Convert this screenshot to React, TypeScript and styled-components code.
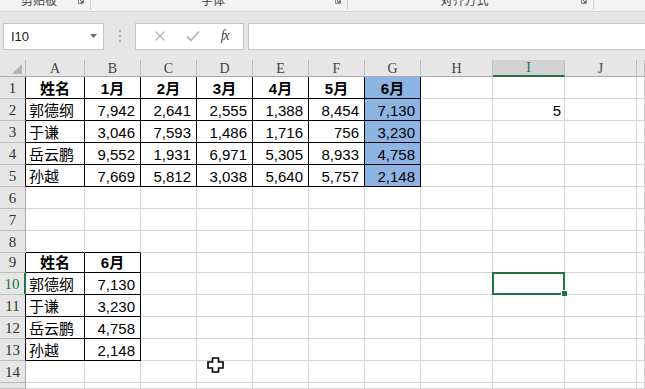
import React from 'react';
import styled, { createGlobalStyle, css } from 'styled-components';

const GlobalStyle = createGlobalStyle`
  html, body {
    margin: 0;
    padding: 0;
    background: #ffffff;
    overflow: hidden;
  }
  * {
    box-sizing: border-box;
  }
`;

const GREEN = '#217346';
const GRID = '#d4d4d4';
const HEAD_LINE = '#bdbdbd';
const UI_FONT = '"Liberation Sans", "Noto Sans CJK SC", sans-serif';
const CELL_FONT = '"Liberation Sans", "Noto Sans CJK SC", sans-serif';
const HEAD_FONT = '"Liberation Serif", "DejaVu Serif", serif';

const Page = styled.div`
  width: 645px;
  height: 389px;
  display: flex;
  flex-direction: column;
  overflow: hidden;
  font-family: ${UI_FONT};
`;

/* ribbon group captions, only their lower half is visible */
const RibbonStrip = styled.div`
  flex-shrink: 0;
  height: 12px;
  display: flex;
  background: #f3f3f3;
  border-bottom: 1px solid #d5d5d5;
  overflow: hidden;
`;

const RibbonGroup = styled.div<{ $w?: number }>`
  display: flex;
  align-items: flex-end;
  ${({ $w }) => ($w ? css`width: ${$w}px;` : css`flex: 1;`)}
  border-right: 1px solid #d0d0d0;
  height: 10px;
  &:last-child {
    border-right: none;
  }
`;

const GroupLabel = styled.span`
  flex: 1;
  text-align: center;
  font-size: 12px;
  line-height: 12px;
  color: #444;
  margin-bottom: 3px;
  white-space: nowrap;
`;

const Launcher = styled.svg`
  width: 6px;
  height: 6px;
  margin: 0 6px 4px 0;
  align-self: flex-end;
  position: relative;
  top: -2px;
`;

const FormulaBand = styled.div`
  flex-shrink: 0;
  height: 48px;
  background: #e6e6e6;
  display: flex;
  align-items: center;
  padding-left: 3px;
`;

const NameBox = styled.div`
  width: 101px;
  height: 27px;
  background: #fff;
  border: 1px solid #c6c6c6;
  display: flex;
  align-items: center;
  justify-content: space-between;
  padding: 0 6px 0 7px;
  font-size: 13px;
  color: #222;
`;

const Dots = styled.div`
  width: 31px;
  display: flex;
  flex-direction: column;
  align-items: center;
  gap: 3px;
  span {
    width: 2px;
    height: 2px;
    background: #b3b3b3;
  }
`;

const FxBox = styled.div`
  width: 109px;
  height: 27px;
  background: #fff;
  border: 1px solid #c6c6c6;
  display: flex;
  align-items: center;
  justify-content: space-around;
  padding: 0 4px 0 8px;
  margin-right: 4px;
`;

const FxText = styled.span`
  font-family: "Liberation Serif", serif;
  font-style: italic;
  font-size: 14px;
  color: #444;
  letter-spacing: -1px;
`;

const FormulaInput = styled.div`
  flex: 1;
  height: 27px;
  background: #fff;
  border: 1px solid #c6c6c6;
  border-right: none;
`;

const SheetArea = styled.div`
  position: relative;
  flex: 1;
  min-height: 0;
  overflow: hidden;
  display: grid;
  grid-template-columns: 26px 59px repeat(6, 56px) 72px 72px 72px 1fr;
  grid-template-rows: 17px repeat(8, 22px) 20px repeat(5, 22px) minmax(0, 1fr);
  background: #fff;
`;

const Corner = styled.div`
  background: #e6e6e6;
  border-right: 1px solid ${HEAD_LINE};
  border-bottom: 1px solid #ababab;
  display: flex;
  align-items: flex-end;
  justify-content: flex-end;
  padding: 0 3px 2px 0;
`;

const ColHead = styled.div<{ $active?: boolean }>`
  background: ${({ $active }) => ($active ? '#d2d2d2' : '#e6e6e6')};
  border-right: 1px solid ${HEAD_LINE};
  border-bottom: ${({ $active }) => ($active ? `2px solid ${GREEN}` : '1px solid #ababab')};
  color: ${({ $active }) => ($active ? GREEN : '#444')};
  font-family: ${HEAD_FONT};
  font-size: 14px;
  line-height: 14px;
  display: flex;
  align-items: center;
  justify-content: center;
  padding-top: 1px;
`;

const RowHead = styled.div<{ $active?: boolean; $edge?: string }>`
  background: #e6e6e6;
  border-bottom: 1px solid ${HEAD_LINE};
  border-right: ${({ $active, $edge }) => ($active ? `2px solid ${GREEN}` : `1px solid ${$edge}`)};
  color: ${({ $active }) => ($active ? GREEN : '#333')};
  font-family: ${HEAD_FONT};
  font-size: 15px;
  line-height: 15px;
  display: flex;
  align-items: flex-end;
  justify-content: center;
  padding-bottom: 2px;
  overflow: hidden;
`;

const Cell = styled.div<{
  $align: 'left' | 'center' | 'right';
  $bold?: boolean;
  $fill?: string;
  $right: string;
  $bottom: string;
  $pad?: number;
}>`
  position: relative;
  background: ${({ $fill }) => $fill || '#fff'};
  border-right: 1px solid ${({ $right }) => $right};
  border-bottom: 1px solid ${({ $bottom }) => $bottom};
  font-family: ${CELL_FONT};
  font-size: 15px;
  line-height: 15px;
  font-weight: ${({ $bold }) => ($bold ? 700 : 400)};
  color: #000;
  display: flex;
  align-items: flex-end;
  justify-content: ${({ $align }) =>
    $align === 'left' ? 'flex-start' : $align === 'right' ? 'flex-end' : 'center'};
  padding: 0 ${({ $pad }) => $pad ?? 3}px 2px 3px;
  white-space: nowrap;
`;

const SelectionFrame = styled.div`
  position: absolute;
  top: -1px;
  left: -1px;
  right: -1px;
  bottom: -1px;
  border: 2px solid ${GREEN};
  z-index: 2;
`;

const FillHandle = styled.div`
  position: absolute;
  right: -3px;
  bottom: -2px;
  width: 6px;
  height: 6px;
  background: ${GREEN};
  border-left: 1px solid #fff;
  border-top: 1px solid #fff;
  z-index: 3;
`;

const Cursor = styled.svg`
  position: absolute;
  left: 207px;
  top: 297px;
  width: 17px;
  height: 16px;
  z-index: 4;
`;

type CellData = { v: string; align?: 'left' | 'center' | 'right'; bold?: boolean; fmt?: boolean };

const COLS = ['A', 'B', 'C', 'D', 'E', 'F', 'G', 'H', 'I', 'J', 'K'];
const ROW_COUNT = 15;
const FILL_BLUE = '#8db4e2';

const months = ['1月', '2月', '3月', '4月', '5月', '6月'];
const mainData: [string, string[]][] = [
  ['郭德纲', ['7,942', '2,641', '2,555', '1,388', '8,454', '7,130']],
  ['于谦', ['3,046', '7,593', '1,486', '1,716', '756', '3,230']],
  ['岳云鹏', ['9,552', '1,931', '6,971', '5,305', '8,933', '4,758']],
  ['孙越', ['7,669', '5,812', '3,038', '5,640', '5,757', '2,148']],
];

const buildCells = () => {
  const cells: Record<string, CellData> = {};
  cells['1-0'] = { v: '姓名', align: 'center', bold: true };
  months.forEach((m, i) => {
    cells[`1-${i + 1}`] = { v: m, align: 'center', bold: true };
  });
  mainData.forEach(([name, nums], r) => {
    cells[`${r + 2}-0`] = { v: name, align: 'left' };
    nums.forEach((n, i) => {
      cells[`${r + 2}-${i + 1}`] = { v: n, align: 'right', fmt: true };
    });
  });
  cells['2-8'] = { v: '5', align: 'right' };
  cells['9-0'] = { v: '姓名', align: 'center', bold: true };
  cells['9-1'] = { v: '6月', align: 'center', bold: true };
  mainData.forEach(([name, nums], r) => {
    cells[`${r + 10}-0`] = { v: name, align: 'left' };
    cells[`${r + 10}-1`] = { v: nums[5], align: 'right', fmt: true };
  });
  return cells;
};

const cells = buildCells();

// row, col (0 = column A); tables at A1:G5 and A9:B13
const inTable = (r: number, c: number) =>
  (r >= 1 && r <= 5 && c >= 0 && c <= 6) || (r >= 9 && r <= 13 && c >= 0 && c <= 1);

const RibbonCaption = ({ label, w }: { label: string; w?: number }) => (
  <RibbonGroup $w={w}>
    <GroupLabel>{label}</GroupLabel>
    {w && (
      <Launcher viewBox="0 0 6 6">
        <path d="M0.5 5.5V0.5H5.5V5.5Z" fill="none" stroke="#888" strokeWidth="1" />
        <path d="M2 2L4.5 4.5M4.5 2.5V4.5H2.5" fill="none" stroke="#666" strokeWidth="1" />
      </Launcher>
    )}
  </RibbonGroup>
);

export default function App() {
  const selRow = 10;
  const selCol = 8;

  const sheet: React.ReactNode[] = [];
  sheet.push(
    <Corner key="corner">
      <svg width="10" height="10" viewBox="0 0 10 10">
        <polygon points="10,0 10,10 0,10" fill="#b4b4b4" />
      </svg>
    </Corner>
  );
  COLS.forEach((c, i) => {
    sheet.push(
      <ColHead key={`h-${c}`} $active={i === selCol}>
        {c === 'K' ? '' : c}
      </ColHead>
    );
  });

  for (let r = 1; r <= ROW_COUNT; r++) {
    // last row is only a sliver at the window edge
    const label = r < ROW_COUNT ? r : '';
    sheet.push(
      <RowHead key={`r-${r}`} $active={r === selRow} $edge={inTable(r, 0) ? '#000' : '#ababab'}>
        {label}
      </RowHead>
    );
    COLS.forEach((_, c) => {
      const d = cells[`${r}-${c}`];
      const right = inTable(r, c) || inTable(r, c + 1) ? '#000' : GRID;
      const bottom = inTable(r, c) || inTable(r + 1, c) ? '#000' : GRID;
      const fill = c === 6 && r >= 1 && r <= 5 ? FILL_BLUE : undefined;
      const selected = r === selRow && c === selCol;
      sheet.push(
        <Cell
          key={`c-${r}-${c}`}
          $align={d?.align ?? 'left'}
          $bold={d?.bold}
          $fill={fill}
          $right={right}
          $bottom={bottom}
          $pad={d?.fmt ? 5 : 3}
        >
          {d?.v}
          {selected && (
            <>
              <SelectionFrame />
              <FillHandle />
            </>
          )}
        </Cell>
      );
    });
  }

  return (
    <>
      <GlobalStyle />
      <Page>
        <RibbonStrip>
          <RibbonCaption label="剪贴板" w={91} />
          <RibbonCaption label="字体" w={257} />
          <RibbonCaption label="对齐方式" w={246} />
          <RibbonCaption label="" />
        </RibbonStrip>

        <FormulaBand>
          <NameBox>
            <span>I10</span>
            <svg width="7" height="4" viewBox="0 0 7 4">
              <polygon points="0,0 7,0 3.5,4" fill="#6a6a6a" />
            </svg>
          </NameBox>
          <Dots>
            <span />
            <span />
            <span />
          </Dots>
          <FxBox>
            <svg width="12" height="12" viewBox="0 0 12 12">
              <path d="M1.5 1.5L10.5 10.5M10.5 1.5L1.5 10.5" stroke="#b5b5b5" strokeWidth="1.3" />
            </svg>
            <svg width="14" height="12" viewBox="0 0 14 12">
              <path d="M1 6.5L5 10.5L13 1.5" fill="none" stroke="#b5b5b5" strokeWidth="1.8" />
            </svg>
            <FxText>fx</FxText>
          </FxBox>
          <FormulaInput />
        </FormulaBand>

        <SheetArea>
          {sheet}
          <Cursor viewBox="0 0 17 16">
            <path
              d="M5.5 1H11.5V5H16V11H11.5V15H5.5V11H1V5H5.5Z"
              fill="#fff"
              stroke="#000"
              strokeWidth="1.6"
            />
          </Cursor>
        </SheetArea>
      </Page>
    </>
  );
}
